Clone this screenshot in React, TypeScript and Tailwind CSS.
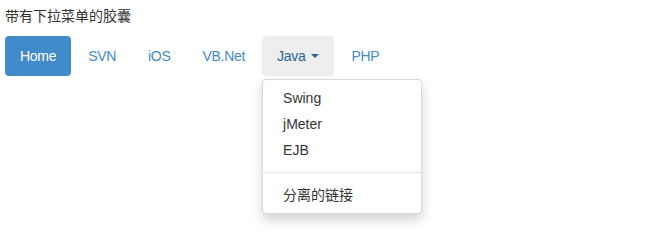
import React from 'react';

const pills = ['Home', 'SVN', 'iOS', 'VB.Net', 'Java', 'PHP'];
const menuItems = ['Swing', 'jMeter', 'EJB'];

const App = () => {
  return (
    <div
      className="min-h-screen bg-white pt-[6px] pl-[5px] text-[14px] leading-[20px] text-[#333]"
      style={{ fontFamily: '"Liberation Sans", Arial, "Noto Sans CJK SC", sans-serif' }}
    >
      <p className="mb-[10px]">带有下拉菜单的胶囊</p>

      {/* nav pills */}
      <ul className="flex tracking-[-0.3px]">
        {pills.map((name, i) => {
          if (name === 'Home') {
            return (
              <li key={name}>
                <a className="block rounded-[4px] bg-[#428bca] px-[15px] py-[10px] text-white">{name}</a>
              </li>
            );
          }
          if (name === 'Java') {
            return (
              <li key={name} className="relative ml-[2px]">
                <a className="flex items-center rounded-[4px] bg-[#eee] px-[15px] py-[10px] text-[#2a6496]">
                  {name}
                  <span className="ml-[6px] h-0 w-0 border-x-[4px] border-t-[4px] border-x-transparent border-t-[#2a6496]" />
                </a>
                {/* dropdown menu */}
                <ul className="absolute left-0 top-full z-10 mt-[3px] w-[160px] rounded-[4px] border border-black/15 bg-white py-[5px] tracking-normal shadow-[0_6px_12px_rgba(0,0,0,0.175)]">
                  {menuItems.map((m) => (
                    <li key={m}>
                      <a className="block px-[20px] py-[3px] text-[#333]">{m}</a>
                    </li>
                  ))}
                  <li className="my-[9px] h-px bg-[#e5e5e5]" />
                  <li>
                    <a className="block px-[20px] py-[3px] text-[#333]">分离的链接</a>
                  </li>
                </ul>
              </li>
            );
          }
          return (
            <li key={name} className={i > 0 ? 'ml-[2px]' : ''}>
              <a className="block rounded-[4px] px-[15px] py-[10px] text-[#428bca]">{name}</a>
            </li>
          );
        })}
      </ul>
    </div>
  );
};

export default App;
